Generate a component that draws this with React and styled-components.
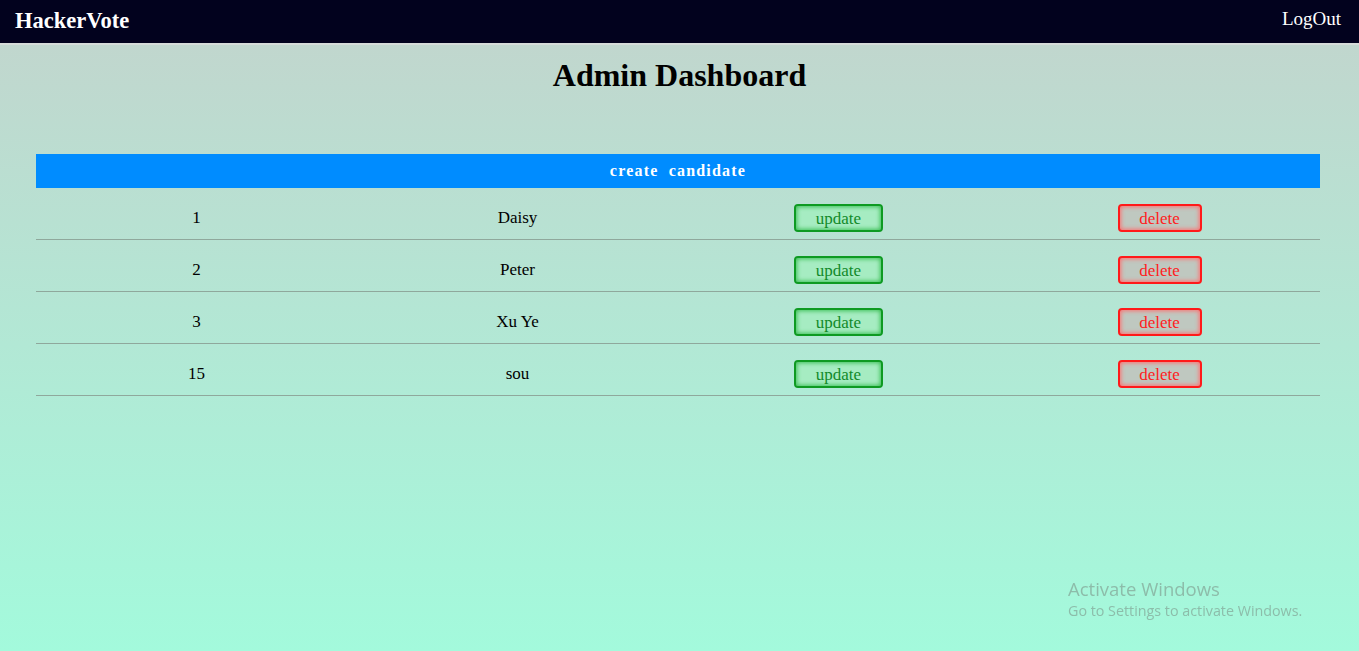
import React from "react";
import styled, { createGlobalStyle } from "styled-components";

const Global = createGlobalStyle`
  html, body { margin: 0; padding: 0; }
  body {
    min-height: 651px;
    font-family: "Liberation Serif", "Times New Roman", serif;
    background: linear-gradient(180deg, #c3d4cd 0%, #a3fadc 100%);
    background-attachment: fixed;
  }
`;

const Page = styled.div`
  min-height: 651px;
  display: flex;
  flex-direction: column;
`;

const NavBar = styled.header`
  height: 45px;
  background: #02021e;
  border-bottom: 2px solid #d6dcd9;
  display: flex;
  align-items: center;
  justify-content: space-between;
  padding: 0 18px 0 15px;
  box-sizing: border-box;
`;

const Brand = styled.div`
  color: #ffffff;
  font-weight: bold;
  font-size: 22.5px;
  margin-top: -2px;
`;

const NavLink = styled.a`
  color: #ffffff;
  font-size: 19px;
  cursor: pointer;
  margin-top: -5px;
`;

const Title = styled.h1`
  margin: 12px 0 0;
  text-align: center;
  font-size: 32px;
  font-weight: bold;
  color: #000;
  line-height: 37px;
`;

const Table = styled.div`
  margin: 60px 39px 0 36px;
  display: flex;
  flex-direction: column;
`;

const HeadBar = styled.div`
  height: 34px;
  background: #008cff;
  color: #fff;
  font-weight: bold;
  font-size: 16px;
  letter-spacing: 1.2px;
  word-spacing: 5px;
  display: flex;
  align-items: center;
  justify-content: center;
  padding-bottom: 1px;
  box-sizing: border-box;
`;

const Row = styled.div`
  display: grid;
  grid-template-columns: repeat(4, 1fr);
  height: 52px;
  align-items: center;
  border-bottom: 1px solid #8fa89c;
  box-sizing: border-box;
  padding-top: 8px;
`;

const Cell = styled.div`
  text-align: center;
  font-size: 17px;
  color: #000;
`;

const ActionButton = styled.button`
  font-family: "Liberation Serif", "Times New Roman", serif;
  font-size: 17px;
  height: 28px;
  width: ${(p) => (p.$danger ? "84px" : "89px")};
  border-radius: 4px;
  border: 2px solid ${(p) => (p.$danger ? "#ff1a1a" : "#0e9a22")};
  color: ${(p) => (p.$danger ? "#ff2020" : "#128a2a")};
  background: ${(p) => (p.$danger ? "#bfc8c0" : "#a6ecc2")};
  box-shadow: inset 0 0 4px 1px ${(p) => (p.$danger ? "#ff7070" : "#3cbf55")};
  cursor: pointer;
  padding: 2px 0 0;
  line-height: 1;
`;

const Watermark = styled.div`
  position: fixed;
  left: 1068px;
  top: 577px;
  font-family: "Open Sans", "Noto Sans", sans-serif;
  color: rgba(120, 140, 130, 0.55);
  pointer-events: none;
`;

const WmTitle = styled.div`
  font-size: 18.5px;
  line-height: 24px;
`;

const WmSub = styled.div`
  font-size: 14.3px;
  line-height: 20px;
`;

const candidates = [
  { id: 1, name: "Daisy" },
  { id: 2, name: "Peter" },
  { id: 3, name: "Xu Ye" },
  { id: 15, name: "sou" },
];

export default function App() {
  return (
    <Page>
      <Global />
      <NavBar>
        <Brand>HackerVote</Brand>
        <NavLink>LogOut</NavLink>
      </NavBar>
      <Title>Admin Dashboard</Title>
      <Table>
        <HeadBar>create candidate</HeadBar>
        {candidates.map((c) => (
          <Row key={c.id}>
            <Cell>{c.id}</Cell>
            <Cell>{c.name}</Cell>
            <Cell>
              <ActionButton>update</ActionButton>
            </Cell>
            <Cell>
              <ActionButton $danger>delete</ActionButton>
            </Cell>
          </Row>
        ))}
      </Table>
      <Watermark>
        <WmTitle>Activate Windows</WmTitle>
        <WmSub>Go to Settings to activate Windows.</WmSub>
      </Watermark>
    </Page>
  );
}
